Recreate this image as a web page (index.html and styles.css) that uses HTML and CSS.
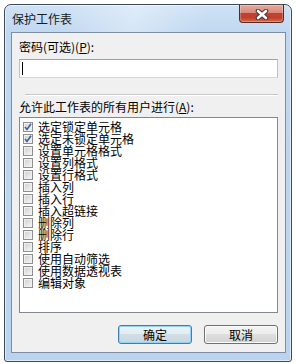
FILE: index.html
```html
<!DOCTYPE html>
<html lang="zh-CN">
<head>
<meta charset="utf-8">
<title>保护工作表</title>
<link rel="stylesheet" href="styles.css">
</head>
<body>
<div class="window">
  <div class="titlebar">
    <span class="title">保护工作表</span>
    <div class="close">
      <svg width="14" height="11" viewBox="0 0 14 11">
        <path d="M3 2 L11 9 M11 2 L3 9" stroke="#3b3b3b" stroke-width="4.6" stroke-linecap="round" fill="none"/>
        <path d="M3 2 L11 9 M11 2 L3 9" stroke="#ffffff" stroke-width="2.6" stroke-linecap="round" fill="none"/>
      </svg>
    </div>
  </div>
  <div class="client">
    <div class="label first">密码(可选)(<u>P</u>):</div>
    <div class="input"><span class="caret"></span></div>
    <div class="sep"></div>
    <div class="label second">允许此工作表的所有用户进行(<u>A</u>):</div>
    <div class="list">
      <div class="item"><span class="cb checked"><svg width="8" height="8" viewBox="0 0 8 8"><path d="M1 4 L3 6.5 L7 0.8" stroke="#3f5f9c" stroke-width="1.6" fill="none"/></svg></span><span>选定锁定单元格</span></div>
      <div class="item"><span class="cb checked"><svg width="8" height="8" viewBox="0 0 8 8"><path d="M1 4 L3 6.5 L7 0.8" stroke="#3f5f9c" stroke-width="1.6" fill="none"/></svg></span><span>选定未锁定单元格</span></div>
      <div class="item"><span class="cb"></span><span>设置单元格格式</span></div>
      <div class="item"><span class="cb"></span><span>设置列格式</span></div>
      <div class="item"><span class="cb"></span><span>设置行格式</span></div>
      <div class="item"><span class="cb"></span><span>插入列</span></div>
      <div class="item"><span class="cb"></span><span>插入行</span></div>
      <div class="item"><span class="cb"></span><span>插入超链接</span></div>
      <div class="item"><span class="cb"></span><span>删除列</span></div>
      <div class="item"><span class="cb"></span><span>删除行</span></div>
      <div class="item"><span class="cb"></span><span>排序</span></div>
      <div class="item"><span class="cb"></span><span>使用自动筛选</span></div>
      <div class="item"><span class="cb"></span><span>使用数据透视表</span></div>
      <div class="item"><span class="cb"></span><span>编辑对象</span></div>
    </div>
    <div class="buttons">
      <div class="btn default">确定</div>
      <div class="btn">取消</div>
    </div>
  </div>
</div>
</body>
</html>
```
FILE: styles.css
```css
html, body {
  margin: 0;
  padding: 0;
  background: #ffffff;
}
body {
  font-family: "Noto Sans CJK SC", "Noto Sans", sans-serif;
  font-size: 12px;
  color: #000000;
}
.window {
  box-sizing: border-box;
  margin: 4px 0 0 4px;
  width: 288px;
  height: 358px;
  border: 1px solid #3e4a56;
  border-radius: 7px 7px 3px 3px;
  background: linear-gradient(to bottom, #cfe2f6 0px, #bfd7f0 30px, #bad3ee 100%);
  box-shadow: inset 0 0 0 1px rgba(255,255,255,0.55);
  padding: 0 5px 8px 6px;
  display: flex;
  flex-direction: column;
}
.titlebar {
  position: relative;
  height: 27px;
  flex: none;
  background: linear-gradient(100deg, rgba(255,255,255,0) 20%, rgba(255,255,255,0.35) 45%, rgba(255,255,255,0) 70%);
  margin: 0 -5px 0 -6px;
  padding-left: 7px;
  display: flex;
  align-items: center;
}
.title {
  font-family: "Noto Sans CJK SC", sans-serif;
  font-size: 12px;
  line-height: 12px;
  color: #1a1a1a;
  margin-top: 1px;
}
.close {
  position: absolute;
  left: 234px;
  top: -1px;
  width: 45px;
  height: 19px;
  box-sizing: border-box;
  border: 1px solid #5a2a22;
  border-top-color: #4a4a4a;
  border-radius: 0 0 4px 4px;
  background: linear-gradient(to bottom, #e8aa9c 0%, #d98a7c 45%, #c2402e 50%, #c0402f 75%, #d96b4f 100%);
  box-shadow: inset 0 0 0 1px rgba(255,255,255,0.25);
  display: flex;
  align-items: center;
  justify-content: center;
}
.close svg {
  display: block;
  margin-top: 1px;
}
.client {
  flex: 1;
  box-sizing: border-box;
  border: 1px solid #7d8ea3;
  background: #f0f0f0;
  display: flex;
  flex-direction: column;
}
.label {
  line-height: 12px;
  height: 12px;
  padding-left: 7px;
  white-space: nowrap;
}
.label.first {
  margin-top: 8px;
}
.label.second {
  margin-top: 5px;
}
.input {
  margin: 6px 0 0 7px;
  width: 259px;
  height: 19px;
  box-sizing: border-box;
  background: #ffffff;
  border: 1px solid #a9c5e2;
  border-top-color: #82a8d0;
  border-bottom-color: #c3daef;
  padding: 2px 0 0 2px;
}
.caret {
  display: block;
  width: 1px;
  height: 13px;
  background: #000000;
}
.sep {
  margin: 16px 0 0 13px;
  width: 253px;
  height: 1px;
  background: #c8c8c8;
  border-bottom: 1px solid #ffffff;
}
.list {
  margin: 4px 0 0 7px;
  width: 259px;
  height: 196px;
  box-sizing: border-box;
  border: 1px solid #828790;
  background: #ffffff;
  padding: 3px 0 0 3px;
  display: flex;
  flex-direction: column;
}
.item {
  height: 12px;
  line-height: 12px;
  display: flex;
  align-items: flex-start;
  white-space: nowrap;
}
.cb {
  flex: none;
  box-sizing: border-box;
  width: 10px;
  height: 10px;
  margin: 1px 5px 0 0;
  border: 1px solid #8f8f8f;
  background: linear-gradient(135deg, #cfd0d2 0%, #e6e6e6 60%, #f6f6f6 100%);
  box-shadow: inset 0 0 0 1px #f0f0f0;
  display: flex;
  align-items: center;
  justify-content: center;
}
.cb svg {
  display: block;
}
.buttons {
  margin-top: 12px;
  padding-right: 7px;
  display: flex;
  justify-content: flex-end;
  gap: 12px;
}
.btn {
  box-sizing: border-box;
  width: 74px;
  height: 19px;
  border: 1px solid #707070;
  border-radius: 3px;
  background: linear-gradient(to bottom, #f4f4f4 0%, #ececec 50%, #dedede 50%, #d2d2d2 100%);
  box-shadow: inset 0 0 0 1px #fbfbfb;
  text-align: center;
  line-height: 17px;
  font-size: 12px;
}
.btn.default {
  border-color: #3c7fb1;
  background: linear-gradient(to bottom, #eaf3f8 0%, #e1ebf1 50%, #d2dee6 50%, #c9d6df 100%);
  box-shadow: inset 0 0 0 1px #8fd4f5;
}
```
